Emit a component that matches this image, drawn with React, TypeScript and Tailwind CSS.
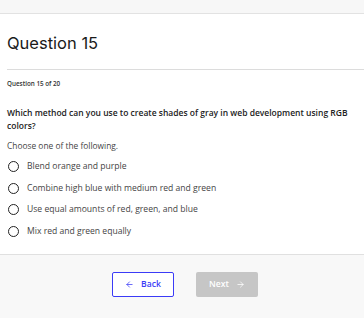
import React from "react";
import { ArrowLeft, ArrowRight } from "lucide-react";

const options = [
  "Blend orange and purple",
  "Combine high blue with medium red and green",
  "Use equal amounts of red, green, and blue",
  "Mix red and green equally",
];

export default function App() {
  return (
    <div className="w-[364px] h-[318px] bg-white flex flex-col" style={{ fontFamily: '"Open Sans", sans-serif' }}>
      <div className="h-[14px] bg-[#f7f7f7] border-b border-[#e2e2e2] shrink-0" />
      <div className="px-[7px]">
        <h1 className="mt-[18px] text-[16.5px] leading-[22px] text-[#1a1a1a] font-normal" style={{ fontFamily: 'Inter, sans-serif' }}>
          Question 15
        </h1>
        <div className="mt-[15px] -mr-[7px] border-t border-[#dcdcdc]" />
        <div className="mt-[9px] text-[6.3px] leading-[9px] font-semibold text-[#333]">Question 15 of 20</div>
        <p className="mt-[18px] text-[8.5px] leading-[13px] font-semibold text-[#222]">
          Which method can you use to create shades of gray in web development using RGB colors?
        </p>
        <div className="mt-[8px] text-[8.4px] leading-[12px] text-[#444]">Choose one of the following.</div>
        <div className="mt-[4px] flex flex-col">
          {options.map((o) => (
            <label key={o} className="flex items-center h-[21.5px] gap-[8px]">
              <span className="w-[11px] h-[11px] rounded-full border-[1.5px] border-[#222] ml-[1px] shrink-0" />
              <span className="text-[8.6px] text-[#444]">{o}</span>
            </label>
          ))}
        </div>
      </div>
      <div className="mt-auto h-[64px] bg-[#f8f8f8] border-t border-[#e0e0e0] flex justify-center items-start pt-[17px] pl-[6px] gap-[22px]">
        <button className="w-[62px] h-[25px] border border-[#3b3bf7] rounded-[2px] bg-white text-[#3b3bf7] text-[8.6px] font-semibold flex items-center justify-center gap-[7px]">
          <ArrowLeft size={9} strokeWidth={2} />
          <span>Back</span>
        </button>
        <button className="w-[62px] h-[25px] rounded-[2px] bg-[#c6c6c6] text-white text-[8.6px] font-semibold flex items-center justify-center gap-[7px]">
          <span>Next</span>
          <ArrowRight size={9} strokeWidth={2} />
        </button>
      </div>
    </div>
  );
}
